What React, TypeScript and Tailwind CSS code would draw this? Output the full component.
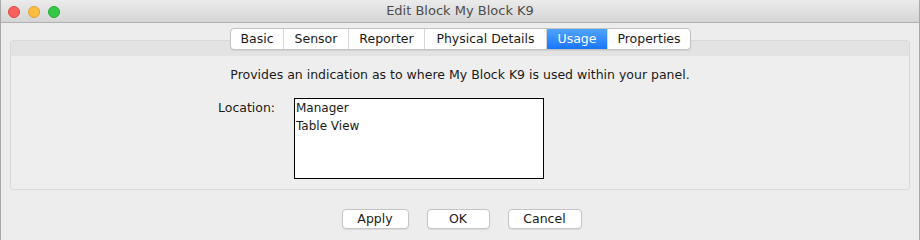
const tabs = ["Basic", "Sensor", "Reporter", "Physical Details", "Usage", "Properties"]
const tabWidths = ["w-[52px]", "w-[65px]", "w-[76px]", "w-[122px]", "w-[61px]", "w-[83px]"]

export default function App() {
    return (
        <div className="w-[920px] h-[240px] bg-[#ededed] flex flex-col border-x border-[#a8a8a8] font-['DejaVu_Sans',sans-serif] text-[12px] text-[#1a1a1a] overflow-hidden">
            {/* title bar */}
            <div className="h-[23px] shrink-0 relative flex items-center justify-center bg-gradient-to-b from-[#ebebeb] to-[#d5d5d5] border-b border-[#b1b1b1] rounded-t-[5px]">
                <div className="absolute left-[7px] top-[6px] flex gap-[8px]">
                    <span className="w-[12px] h-[12px] rounded-full bg-[#fc605c] border border-[#de4a44]" />
                    <span className="w-[12px] h-[12px] rounded-full bg-[#fdbc40] border border-[#dea236]" />
                    <span className="w-[12px] h-[12px] rounded-full bg-[#34c84a] border border-[#27aa35]" />
                </div>
                <span className="text-[13px] text-[#4d4d4d]">Edit Block My Block K9</span>
            </div>

            {/* tab pane */}
            <div className="relative mx-[9px] mt-[17px] h-[150px] border border-[#d9d9d9] rounded-[3px] bg-[#eeeeee] flex flex-col">
                <div className="h-[15px] bg-[#e3e3e3] shrink-0" />
                <div className="absolute left-[219px] -top-[13px] flex h-[22px] bg-white border border-[#c2c2c2] rounded-[4px] overflow-hidden shadow-[0_1px_1px_rgba(0,0,0,0.08)]">
                    {tabs.map((t, i) => (
                        <div
                            key={t}
                            className={
                                "flex items-center justify-center text-[12.5px] " +
                                tabWidths[i] +
                                (i > 0 ? " border-l border-[#d6d6d6]" : "") +
                                (t === "Usage" ? " bg-gradient-to-b from-[#4fa3fd] to-[#1675fb] text-white" : " text-[#1a1a1a]")
                            }
                        >
                            {t}
                        </div>
                    ))}
                </div>
                <div className="flex flex-col items-center pt-[10px]">
                    <p className="text-[12.5px]">Provides an indication as to where My Block K9 is used within your panel.</p>
                </div>
                <div className="flex mt-[13px]">
                    <span className="ml-[207px] w-[76px] text-[12.5px] pt-[1px]">Location:</span>
                    <div className="w-[250px] h-[81px] bg-white border border-black flex flex-col px-[1px] leading-[18px] text-[12px]">
                        <span>Manager</span>
                        <span>Table View</span>
                    </div>
                </div>
            </div>

            {/* buttons */}
            <div className="flex justify-center gap-[18px] mt-[19px] pl-[3px]">
                <button className="w-[67px] h-[20px] bg-white border border-[#c5c5c5] rounded-[4px] text-[12.5px] shadow-[0_1px_1px_rgba(0,0,0,0.08)]">Apply</button>
                <button className="w-[63px] h-[20px] bg-white border border-[#c5c5c5] rounded-[4px] text-[12.5px] shadow-[0_1px_1px_rgba(0,0,0,0.08)]">OK</button>
                <button className="w-[74px] h-[20px] bg-white border border-[#c5c5c5] rounded-[4px] text-[12.5px] shadow-[0_1px_1px_rgba(0,0,0,0.08)]">Cancel</button>
            </div>
        </div>
    )
}
